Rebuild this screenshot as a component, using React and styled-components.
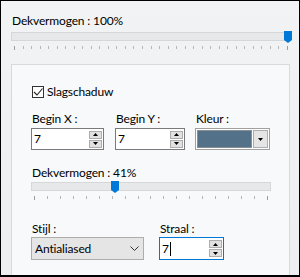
import React from 'react';
import styled, { createGlobalStyle } from 'styled-components';

const GlobalStyle = createGlobalStyle`
  html, body { margin: 0; padding: 0; }
  body {
    font-family: Lato, "Noto Sans", sans-serif;
    font-size: 12px;
    letter-spacing: -0.15px;
    color: #000;
  }
`;

const Window = styled.div`
  box-sizing: border-box;
  width: 300px;
  height: 277px;
  border: 1px solid #000;
  border-bottom-width: 2px;
  background: linear-gradient(#f1f3f4, #eceeef);
  padding: 12px 9px 0 10px;
  display: flex;
  flex-direction: column;
  overflow: hidden;
`;

const Label = styled.div`
  line-height: 16px;
  height: 16px;
  padding-left: 1px;
  white-space: nowrap;
`;

const SliderWrap = styled.div`
  position: relative;
  width: ${p => p.$width}px;
`;

const Track = styled.div`
  box-sizing: border-box;
  height: 9px;
  margin-top: ${p => p.$top}px;
  background: #e6e8e9;
  border: 1px solid #d5d7d8;
`;

const Ticks = styled.div`
  display: flex;
  justify-content: space-between;
  padding: 0 3px;
  margin-top: 5px;
  height: 4px;
`;

const Tick = styled.span`
  width: 1px;
  height: ${p => (p.$end ? 4 : 3)}px;
  background: ${p => (p.$end ? '#9a9c9d' : '#b4b6b7')};
`;

const Thumb = styled.svg`
  position: absolute;
  top: ${p => p.$top}px;
  left: ${p => p.$left}px;
  width: 8px;
  height: 12px;
`;

const Panel = styled.div`
  flex: 1;
  box-sizing: border-box;
  width: 279px;
  margin-top: 14px;
  border: 1px solid #d7d9da;
  border-bottom: none;
  background: #f8f9fa;
  padding: 19px 0 0 19px;
  display: flex;
  flex-direction: column;
`;

const CheckRow = styled.label`
  display: flex;
  align-items: center;
  height: 16px;
  line-height: 16px;
  gap: 3px;
  padding-left: 1px;
`;

const CheckBox = styled.span`
  box-sizing: border-box;
  width: 12px;
  height: 12px;
  border: 1px solid #333;
  background: #fff;
  display: flex;
  align-items: center;
  justify-content: center;
`;

const Row = styled.div`
  display: flex;
  margin-top: ${p => p.$top}px;
`;

const Field = styled.div`
  display: flex;
  flex-direction: column;
  width: ${p => p.$width}px;
  margin-right: ${p => p.$gap || 0}px;
`;

const Section = styled.div`
  display: flex;
  flex-direction: column;
  margin-top: ${p => p.$top}px;
`;

const InputBox = styled.div`
  box-sizing: border-box;
  height: ${p => p.$h || 22}px;
  margin-top: ${p => p.$mt ?? 1}px;
  border: 1px solid ${p => (p.$focus ? '#0078d7' : '#7a7a7a')};
  background: #fff;
  display: flex;
  align-items: center;
  padding: 0 1px 0 2px;
`;

const Value = styled.span`
  flex: 1;
  line-height: 16px;
  display: flex;
  align-items: center;
`;

const Caret = styled.span`
  display: inline-block;
  width: 1px;
  height: 14px;
  background: #000;
  margin-left: 1px;
`;

const SpinCol = styled.div`
  display: flex;
  flex-direction: column;
  gap: 1px;
`;

const SpinBtn = styled.div`
  box-sizing: border-box;
  width: 13px;
  height: 8px;
  border: 1px solid #adadad;
  background: #e1e1e1;
  display: flex;
  align-items: center;
  justify-content: center;
`;

const ColorBox = styled.div`
  box-sizing: border-box;
  height: 22px;
  margin-top: 1px;
  border: 1px solid #a0a0a0;
  background: #fff;
  display: flex;
  align-items: stretch;
  padding: 1px;
  gap: 1px;
`;

const Swatch = styled.div`
  flex: 1;
  background: ${p => p.$color};
  border: 1px solid #8a8f93;
`;

const DropBtn = styled.div`
  box-sizing: border-box;
  width: 15px;
  border: 1px solid #adadad;
  background: #e5e5e5;
  display: flex;
  align-items: center;
  justify-content: center;
`;

const Select = styled.div`
  box-sizing: border-box;
  height: 23px;
  border: 1px solid #adadad;
  background: #e5e5e5;
  display: flex;
  align-items: center;
  justify-content: space-between;
  padding: 0 4px 0 3px;
  line-height: 16px;
`;

const Up = () => (
  <svg width="5" height="3" viewBox="0 0 5 3"><path d="M2.5 0 L5 3 L0 3 Z" fill="#000" /></svg>
);
const Down = () => (
  <svg width="5" height="3" viewBox="0 0 5 3"><path d="M0 0 L5 0 L2.5 3 Z" fill="#000" /></svg>
);

const Spin = () => (
  <SpinCol>
    <SpinBtn><Up /></SpinBtn>
    <SpinBtn><Down /></SpinBtn>
  </SpinCol>
);

const Slider = ({ width, trackTop, ticks, thumbLeft }) => (
  <SliderWrap $width={width}>
    <Track $top={trackTop} />
    <Ticks>
      {Array.from({ length: ticks }).map((_, i) => (
        <Tick key={i} $end={i === 0 || i === ticks - 1} />
      ))}
    </Ticks>
    <Thumb $top={trackTop - 1} $left={thumbLeft} viewBox="0 0 8 12">
      <path d="M0 0 H8 V9 L4 12 L0 9 Z" fill="#0078d7" />
    </Thumb>
  </SliderWrap>
);

export default function App() {
  return (
    <>
      <GlobalStyle />
      <Window>
        <Label>Dekvermogen : 100%</Label>
        <Slider width={280} trackTop={3} ticks={33} thumbLeft={273} />
        <Panel>
          <CheckRow>
            <CheckBox>
              <svg width="10" height="10" viewBox="0 0 10 10">
                <path d="M1 5 L4 8 L9.5 1.5" fill="none" stroke="#222" strokeWidth="1.1" />
              </svg>
            </CheckBox>
            Slagschaduw
          </CheckRow>
          <Row $top={11}>
            <Field $width={73} $gap={11}>
              <Label>Begin X :</Label>
              <InputBox>
                <Value>7</Value>
                <Spin />
              </InputBox>
            </Field>
            <Field $width={70} $gap={10}>
              <Label>Begin Y :</Label>
              <InputBox>
                <Value>7</Value>
                <Spin />
              </InputBox>
            </Field>
            <Field $width={75}>
              <Label>Kleur :</Label>
              <ColorBox>
                <Swatch $color="#537189" />
                <DropBtn><Down /></DropBtn>
              </ColorBox>
            </Field>
          </Row>
          <Section $top={15}>
            <Label>Dekvermogen : 41%</Label>
            <Slider width={240} trackTop={1} ticks={19} thumbLeft={80} />
          </Section>
          <Row $top={21}>
            <Field $width={113} $gap={15}>
              <Label>Stijl :</Label>
              <Select>
                Antialiased
                <svg width="9" height="5" viewBox="0 0 9 5">
                  <path d="M0.5 0.5 L4.5 4.5 L8.5 0.5" fill="none" stroke="#333" strokeWidth="1" />
                </svg>
              </Select>
            </Field>
            <Field $width={65}>
              <Label>Straal :</Label>
              <InputBox $focus $h={23} $mt={0}>
                <Value>7<Caret /></Value>
                <Spin />
              </InputBox>
            </Field>
          </Row>
        </Panel>
      </Window>
    </>
  );
}
